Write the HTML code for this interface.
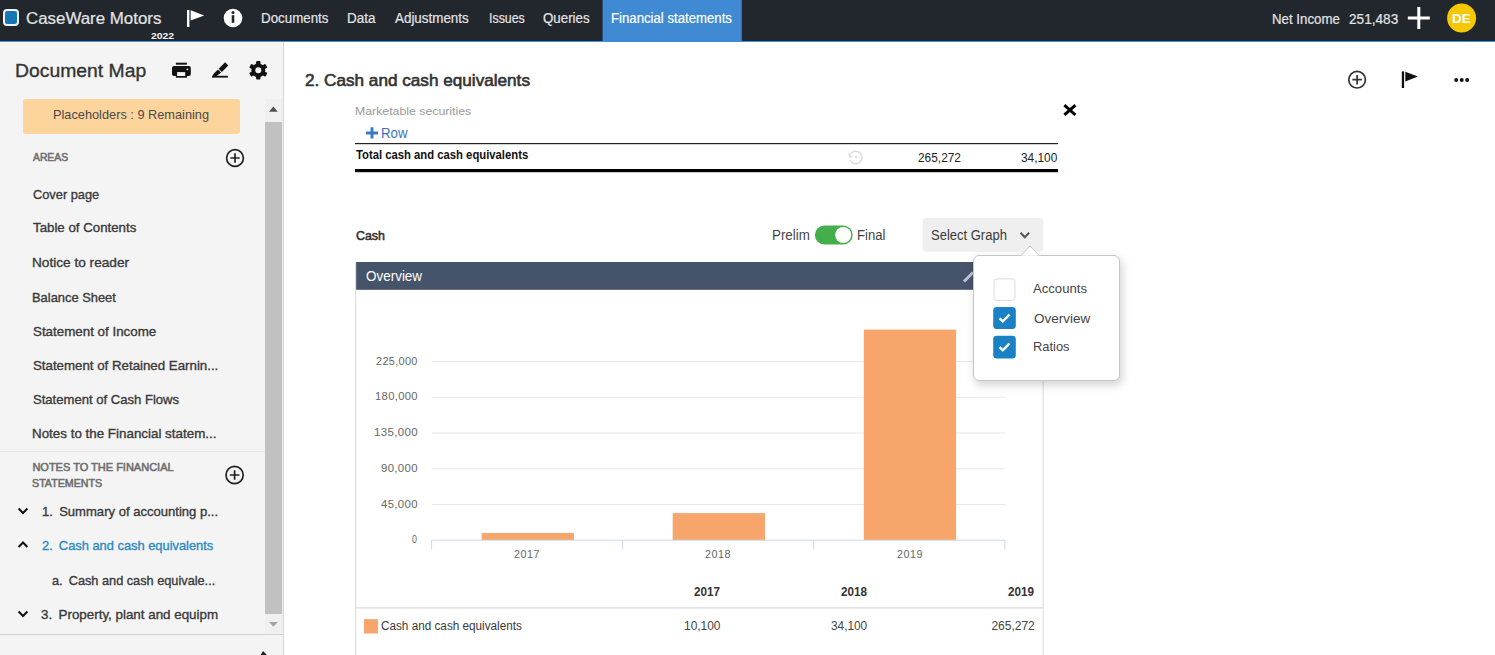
<!DOCTYPE html>
<html><head><meta charset="utf-8">
<style>
*{box-sizing:border-box;margin:0;padding:0}
html,body{width:1495px;height:655px;overflow:hidden;background:#fff;font-family:"Liberation Sans",sans-serif;color:#333}
.a{position:absolute}
.tx{position:absolute;white-space:nowrap;line-height:1;transform-origin:0 0}
svg{position:absolute;overflow:visible}
</style></head><body>
<!-- header -->
<div class="a" style="left:0;top:0;width:1495px;height:41px;background:#22272e"></div>
<div class="a" style="left:0;top:41px;width:1495px;height:1px;background:#3f8fd8"></div>
<div class="a" style="left:3px;top:9px;width:16px;height:17px;border:2px solid #f4f4f4;border-radius:4px;background:#1577b6"></div>
<svg style="left:0;top:0" width="1495" height="41">
  <rect x="187" y="10" width="2.4" height="17" fill="#fff"/>
  <path d="M190.6 10.2 L204.2 15.4 L190.6 20.6Z" fill="#fff"/>
  <circle cx="233" cy="18" r="9.3" fill="#fff"/>
  <rect x="231.7" y="15.2" width="2.6" height="7.6" fill="#22272e"/>
  <circle cx="233" cy="12.6" r="1.5" fill="#22272e"/>
  <rect x="602.6" y="0" width="139.1" height="41" fill="#3f8ad2"/>
  <rect x="1417.3" y="7" width="3" height="22" fill="#fff"/>
  <rect x="1407.8" y="16.5" width="22" height="3" fill="#fff"/>
  <circle cx="1461.6" cy="18" r="14.5" fill="#f5c802"/>
</svg>
<!-- sidebar -->
<div class="a" style="left:0;top:42px;width:283px;height:613px;background:#f4f4f4"></div>
<div class="a" style="left:283px;top:42px;width:1px;height:613px;background:#d6d6d6"></div>
<div class="a" style="left:23px;top:99px;width:217px;height:34.5px;background:#fdd49c;border-radius:3px"></div>
<div class="a" style="left:264.5px;top:98.5px;width:18px;height:535px;background:#f0f0f0"></div>
<div class="a" style="left:265px;top:122px;width:17px;height:492px;background:#c1c1c1"></div>
<div class="a" style="left:0;top:451px;width:264.5px;height:1px;background:#e4e4e4"></div>
<div class="a" style="left:0;top:634px;width:283px;height:1px;background:#d2d2d2"></div>
<svg style="left:0;top:0" width="284" height="655">
  <path d="M269 111.8 L273.4 106.6 L277.8 111.8Z" fill="#505050"/>
  <path d="M269 622 L273.4 626.7 L277.8 622Z" fill="#a3a3a3"/>
  <!-- print -->
  <rect x="175.9" y="62.7" width="11" height="2" fill="#111"/>
  <rect x="172" y="66" width="18.8" height="10" rx="2" fill="#111"/>
  <rect x="175.9" y="71" width="11" height="6.7" fill="#111"/>
  <rect x="177.1" y="72.1" width="8.1" height="3.9" fill="#f4f4f4"/>
  <circle cx="187.4" cy="69.3" r="0.9" fill="#f4f4f4"/>
  <!-- pen -->
  <path d="M225.2 62.3 L228.3 65.4 L221.8 71.9 L218.7 68.8Z" fill="#111"/>
  <path d="M218 69.5 L221.1 72.6 L216.3 76.2 L212.1 77.4 L213.4 73.9Z" fill="#111"/>
  <rect x="212.1" y="75.8" width="15.8" height="1.8" fill="#111"/>
  <!-- gear -->
  <g transform="translate(258.3 70.3)" fill="#111">
    <circle r="6.9"/>
    <rect x="-2.2" y="-9.3" width="4.4" height="18.6" rx="1"/>
    <rect x="-2.2" y="-9.3" width="4.4" height="18.6" rx="1" transform="rotate(60)"/>
    <rect x="-2.2" y="-9.3" width="4.4" height="18.6" rx="1" transform="rotate(120)"/>
    <circle r="3" fill="#f4f4f4"/>
  </g>
  <!-- plus circles -->
  <g fill="none" stroke="#222" stroke-width="1.7">
    <circle cx="235" cy="158" r="8.4"/>
    <path d="M235 153.3V162.7M230.3 158H239.7"/>
    <circle cx="234.6" cy="475" r="8.6"/>
    <path d="M234.6 470.2V479.8M229.8 475H239.4"/>
  </g>
  <!-- chevrons -->
  <g fill="none" stroke="#111" stroke-width="2">
    <path d="M18.6 508.5 L23 513 L27.4 508.5"/>
    <path d="M18.6 547 L23 542.5 L27.4 547"/>
    <path d="M18.6 611.5 L23 616 L27.4 611.5"/>
  </g>
  <path d="M263 651 L266.5 654.5 L264 657 L259.5 657Z" fill="#222"/>
</svg>
<!-- main -->
<svg style="left:0;top:0" width="1495" height="655">
  <!-- top right icons -->
  <g fill="none" stroke="#333" stroke-width="1.7">
    <circle cx="1357.1" cy="79.7" r="8.3"/>
    <path d="M1357.1 75V84.4M1352.4 79.7H1361.8"/>
  </g>
  <rect x="1401.8" y="71.4" width="2.3" height="16.6" fill="#111"/>
  <path d="M1405.3 71.7 L1417.9 76.5 L1405.3 81.4Z" fill="#111"/>
  <circle cx="1456.2" cy="80" r="2" fill="#111"/>
  <circle cx="1461.7" cy="80" r="2" fill="#111"/>
  <circle cx="1467.2" cy="80" r="2" fill="#111"/>
  <!-- close X -->
  <path d="M1065.5 106.2 L1074.3 114 M1074.3 106.2 L1065.5 114" stroke="#000" stroke-width="3" stroke-linecap="square"/>
  <!-- + row -->
  <path d="M372 127.2V138.6M365.9 132.9H378" stroke="#3b7ac4" stroke-width="3"/>
  <rect x="355" y="143" width="703" height="1.2" fill="#222"/>
  <g fill="none" stroke="#dcdcdc" stroke-width="1.5">
    <path d="M850.5 154 A6.3 6.3 0 1 1 850 160"/>
  </g>
  <path d="M848.4 152.5 L852.5 157 L849 157.5Z" fill="#dcdcdc"/>
  <circle cx="856.1" cy="156.8" r="1.2" fill="#dcdcdc"/>
  <rect x="355" y="169" width="703" height="3.2" fill="#000"/>
  <!-- toggle -->
  <rect x="814.9" y="225.5" width="37.8" height="19" rx="9.5" fill="#45ae4c"/>
  <circle cx="843.2" cy="235" r="8" fill="#fff"/>
  <!-- select graph -->
  <rect x="922.6" y="218.1" width="120.6" height="33.6" rx="4" fill="#efefef"/>
  <path d="M1020.5 232.8 L1024.8 237.3 L1029.1 232.8" fill="none" stroke="#555" stroke-width="2"/>
  <!-- panel -->
  <rect x="355.9" y="262" width="687.4" height="27.8" fill="#46546b"/>
  <rect x="355.2" y="262" width="1" height="400" fill="#d9d9d9"/>
  <rect x="1042.6" y="262" width="1" height="400" fill="#d9d9d9"/>
  <path d="M964 281.5 L973 272.5" stroke="#bdc4cf" stroke-width="3"/>
  <!-- grid -->
  <g fill="#e8e8e8">
    <rect x="432" y="361.1" width="572.9" height="1"/>
    <rect x="432" y="396.8" width="572.9" height="1"/>
    <rect x="432" y="432.5" width="572.9" height="1"/>
    <rect x="432" y="468.3" width="572.9" height="1"/>
    <rect x="432" y="504" width="572.9" height="1"/>
  </g>
  <g fill="#f7a56b">
    <rect x="481.6" y="533" width="92.3" height="7.2"/>
    <rect x="672.7" y="513.1" width="92.3" height="27.1"/>
    <rect x="863.8" y="329.6" width="92.3" height="210.6"/>
  </g>
  <g fill="#ccd6eb">
    <rect x="431.6" y="539.7" width="573.3" height="1"/>
    <rect x="431.1" y="540" width="1" height="9.4"/>
    <rect x="622.2" y="540" width="1" height="9.4"/>
    <rect x="813.3" y="540" width="1" height="9.4"/>
    <rect x="1004.4" y="540" width="1" height="9.4"/>
  </g>
  <rect x="356" y="607" width="687" height="1.6" fill="#e3e3e3"/>
  <rect x="364" y="619.2" width="14" height="14.3" fill="#f7a56b"/>
</svg>
<!-- popup -->
<div class="a" style="left:973.4px;top:255.4px;width:146.2px;height:125.8px;background:#fff;border:1px solid #c6c6c6;border-radius:6px;box-shadow:2px 4px 10px rgba(0,0,0,0.18)"></div>
<svg style="left:0;top:0" width="1495" height="655">
  <path d="M1020.3 256.2 L1030 246 L1039.7 256.2Z" fill="#fff" stroke="#c6c6c6" stroke-width="1"/>
  <rect x="1019" y="255.9" width="22" height="2" fill="#fff"/>
  <rect x="994" y="278.9" width="21" height="21.5" rx="3" fill="#fff" stroke="#dcdcdc" stroke-width="1"/>
  <rect x="993.2" y="307.1" width="22.6" height="22" rx="3.5" fill="#1a82c4"/>
  <rect x="993.2" y="335.8" width="22.6" height="22.8" rx="3.5" fill="#1a82c4"/>
  <path d="M999.6 318.3 L1002.8 321.4 L1009.5 314.6" fill="none" stroke="#fff" stroke-width="2.4"/>
  <path d="M999.6 347.2 L1002.8 350.3 L1009.5 343.5" fill="none" stroke="#fff" stroke-width="2.4"/>
</svg>
<div class="tx" style="left:26.00px;top:11.26px;font-size:16px;font-weight:400;color:#e4e4e4;transform:scaleX(1.0547);-webkit-text-stroke:0.2px #e4e4e4;">CaseWare Motors</div>
<div class="tx" style="left:150.80px;top:31.16px;font-size:9.5px;font-weight:700;color:#f2f2f2;transform:scaleX(1.0952);">2022</div>
<div class="tx" style="left:260.75px;top:11.05px;font-size:14px;font-weight:400;color:#e4e4e4;transform:scaleX(0.9529);-webkit-text-stroke:0.2px #e4e4e4;">Documents</div>
<div class="tx" style="left:346.84px;top:11.05px;font-size:14px;font-weight:400;color:#e4e4e4;transform:scaleX(0.9586);-webkit-text-stroke:0.2px #e4e4e4;">Data</div>
<div class="tx" style="left:395.00px;top:11.05px;font-size:14px;font-weight:400;color:#e4e4e4;transform:scaleX(0.9571);-webkit-text-stroke:0.2px #e4e4e4;">Adjustments</div>
<div class="tx" style="left:488.62px;top:11.05px;font-size:14px;font-weight:400;color:#e4e4e4;transform:scaleX(0.8846);-webkit-text-stroke:0.2px #e4e4e4;">Issues</div>
<div class="tx" style="left:543.40px;top:11.05px;font-size:14px;font-weight:400;color:#e4e4e4;transform:scaleX(0.9510);-webkit-text-stroke:0.2px #e4e4e4;">Queries</div>
<div class="tx" style="left:611.26px;top:11.05px;font-size:14px;font-weight:400;color:#fff;transform:scaleX(0.9417);-webkit-text-stroke:0.2px #fff;">Financial statements</div>
<div class="tx" style="left:1271.65px;top:11.75px;font-size:14px;font-weight:400;color:#e4e4e4;transform:scaleX(0.9471);-webkit-text-stroke:0.2px #e4e4e4;">Net Income</div>
<div class="tx" style="left:1349.30px;top:11.75px;font-size:14px;font-weight:400;color:#e4e4e4;transform:scaleX(0.9740);-webkit-text-stroke:0.2px #e4e4e4;">251,483</div>
<div class="tx" style="left:1451.96px;top:11.80px;font-size:13px;font-weight:700;color:#fff;transform:scaleX(1.0353);">DE</div>
<div class="tx" style="left:15.48px;top:60.92px;font-size:19px;font-weight:400;color:#333;transform:scaleX(1.0180);-webkit-text-stroke:0.35px #333;">Document Map</div>
<div class="tx" style="left:53.05px;top:108.27px;font-size:13.5px;font-weight:400;color:#4a4a4a;transform:scaleX(0.9451);">Placeholders : 9 Remaining</div>
<div class="tx" style="left:32.50px;top:152.09px;font-size:11px;font-weight:400;color:#6e6e6e;transform:scaleX(0.9395);-webkit-text-stroke:0.55px #6e6e6e;">AREAS</div>
<div class="tx" style="left:32.50px;top:187.80px;font-size:13px;font-weight:400;color:#3a3a3a;transform:scaleX(0.9851);-webkit-text-stroke:0.35px #3a3a3a;">Cover page</div>
<div class="tx" style="left:32.50px;top:221.40px;font-size:13px;font-weight:400;color:#3a3a3a;transform:scaleX(1.0208);-webkit-text-stroke:0.35px #3a3a3a;">Table of Contents</div>
<div class="tx" style="left:32.25px;top:255.90px;font-size:13px;font-weight:400;color:#3a3a3a;transform:scaleX(1.0489);-webkit-text-stroke:0.35px #3a3a3a;">Notice to reader</div>
<div class="tx" style="left:32.31px;top:290.80px;font-size:13px;font-weight:400;color:#3a3a3a;transform:scaleX(0.9917);-webkit-text-stroke:0.35px #3a3a3a;">Balance Sheet</div>
<div class="tx" style="left:32.50px;top:325.00px;font-size:13px;font-weight:400;color:#3a3a3a;transform:scaleX(1.0275);-webkit-text-stroke:0.35px #3a3a3a;">Statement of Income</div>
<div class="tx" style="left:32.50px;top:358.80px;font-size:13px;font-weight:400;color:#3a3a3a;transform:scaleX(1.0215);-webkit-text-stroke:0.35px #3a3a3a;">Statement of Retained Earnin...</div>
<div class="tx" style="left:32.50px;top:392.70px;font-size:13px;font-weight:400;color:#3a3a3a;transform:scaleX(1.0055);-webkit-text-stroke:0.35px #3a3a3a;">Statement of Cash Flows</div>
<div class="tx" style="left:32.27px;top:426.60px;font-size:13px;font-weight:400;color:#3a3a3a;transform:scaleX(1.0292);-webkit-text-stroke:0.35px #3a3a3a;">Notes to the Financial statem...</div>
<div class="tx" style="left:32.40px;top:461.69px;font-size:11px;font-weight:400;color:#6e6e6e;-webkit-text-stroke:0.55px #6e6e6e;">NOTES TO THE FINANCIAL</div>
<div class="tx" style="left:32.40px;top:477.69px;font-size:11px;font-weight:400;color:#6e6e6e;transform:scaleX(0.9712);-webkit-text-stroke:0.55px #6e6e6e;">STATEMENTS</div>
<div class="tx" style="left:41.60px;top:505.30px;font-size:13px;font-weight:400;color:#3a3a3a;transform:scaleX(1.0046);-webkit-text-stroke:0.35px #3a3a3a;">1.  Summary of accounting p...</div>
<div class="tx" style="left:41.60px;top:538.90px;font-size:13px;font-weight:400;color:#2a8ac4;transform:scaleX(0.9890);-webkit-text-stroke:0.35px #2a8ac4;">2.  Cash and cash equivalents</div>
<div class="tx" style="left:52.40px;top:573.50px;font-size:13px;font-weight:400;color:#3a3a3a;transform:scaleX(0.9795);-webkit-text-stroke:0.35px #3a3a3a;">a.  Cash and cash equivale...</div>
<div class="tx" style="left:41.30px;top:607.90px;font-size:13px;font-weight:400;color:#3a3a3a;transform:scaleX(1.0285);-webkit-text-stroke:0.35px #3a3a3a;">3.  Property, plant and equipm</div>
<div class="tx" style="left:305.40px;top:72.03px;font-size:16.5px;font-weight:400;color:#333;transform:scaleX(1.0392);-webkit-text-stroke:0.6px #333;">2. Cash and cash equivalents</div>
<div class="tx" style="left:354.73px;top:105.97px;font-size:11.5px;font-weight:400;color:#9a9a9a;transform:scaleX(1.0694);">Marketable securities</div>
<div class="tx" style="left:381.36px;top:126.15px;font-size:14px;font-weight:400;color:#3b73b6;transform:scaleX(0.9444);">Row</div>
<div class="tx" style="left:355.50px;top:148.84px;font-size:12px;font-weight:700;color:#111;transform:scaleX(0.9399);">Total cash and cash equivalents</div>
<div class="tx" style="left:917.80px;top:151.74px;font-size:12px;font-weight:400;color:#222;transform:scaleX(0.9907);">265,272</div>
<div class="tx" style="left:1021.40px;top:151.74px;font-size:12px;font-weight:400;color:#222;transform:scaleX(0.9892);">34,100</div>
<div class="tx" style="left:355.60px;top:228.50px;font-size:13px;font-weight:400;color:#333;transform:scaleX(0.9533);-webkit-text-stroke:0.55px #333;">Cash</div>
<div class="tx" style="left:771.64px;top:228.15px;font-size:14px;font-weight:400;color:#444;transform:scaleX(0.9553);">Prelim</div>
<div class="tx" style="left:857.07px;top:228.15px;font-size:14px;font-weight:400;color:#444;transform:scaleX(0.9345);">Final</div>
<div class="tx" style="left:930.77px;top:228.15px;font-size:14px;font-weight:400;color:#3a3a3a;transform:scaleX(0.9287);">Select Graph</div>
<div class="tx" style="left:366.30px;top:268.85px;font-size:14px;font-weight:400;color:#fff;transform:scaleX(0.9610);">Overview</div>
<div class="tx" style="left:1033.30px;top:282.40px;font-size:13px;font-weight:400;color:#444;transform:scaleX(1.0094);">Accounts</div>
<div class="tx" style="left:1033.80px;top:311.80px;font-size:13px;font-weight:400;color:#444;transform:scaleX(1.0370);">Overview</div>
<div class="tx" style="left:1032.81px;top:340.40px;font-size:13px;font-weight:400;color:#444;transform:scaleX(0.9917);">Ratios</div>
<div class="tx" style="left:412.00px;top:535.34px;font-size:10px;font-weight:400;color:#666;transform:scaleX(0.8833);letter-spacing:0.3px;">0</div>
<div class="tx" style="left:380.90px;top:499.62px;font-size:10px;font-weight:400;color:#666;transform:scaleX(1.1375);letter-spacing:0.3px;">45,000</div>
<div class="tx" style="left:380.90px;top:463.90px;font-size:10px;font-weight:400;color:#666;transform:scaleX(1.1375);letter-spacing:0.3px;">90,000</div>
<div class="tx" style="left:373.65px;top:428.18px;font-size:10px;font-weight:400;color:#666;transform:scaleX(1.1486);letter-spacing:0.3px;">135,000</div>
<div class="tx" style="left:374.68px;top:392.46px;font-size:10px;font-weight:400;color:#666;transform:scaleX(1.1216);letter-spacing:0.3px;">180,000</div>
<div class="tx" style="left:375.80px;top:356.74px;font-size:10px;font-weight:400;color:#666;transform:scaleX(1.0921);letter-spacing:0.3px;">225,000</div>
<div class="tx" style="left:514.30px;top:549.93px;font-size:10px;font-weight:400;color:#666;transform:scaleX(1.0708);letter-spacing:0.5px;">2017</div>
<div class="tx" style="left:705.40px;top:549.93px;font-size:10px;font-weight:400;color:#666;transform:scaleX(1.0708);letter-spacing:0.5px;">2018</div>
<div class="tx" style="left:896.50px;top:549.93px;font-size:10px;font-weight:400;color:#666;transform:scaleX(1.0708);letter-spacing:0.5px;">2019</div>
<div class="tx" style="left:694.00px;top:585.84px;font-size:12px;font-weight:700;color:#333;transform:scaleX(0.9741);">2017</div>
<div class="tx" style="left:841.10px;top:585.84px;font-size:12px;font-weight:700;color:#333;transform:scaleX(0.9741);">2018</div>
<div class="tx" style="left:1008.20px;top:585.84px;font-size:12px;font-weight:700;color:#333;transform:scaleX(0.9741);">2019</div>
<div class="tx" style="left:381.20px;top:620.24px;font-size:12px;font-weight:400;color:#3a3a3a;transform:scaleX(0.9778);">Cash and cash equivalents</div>
<div class="tx" style="left:684.01px;top:619.84px;font-size:12px;font-weight:400;color:#444;transform:scaleX(0.9944);">10,100</div>
<div class="tx" style="left:831.00px;top:619.84px;font-size:12px;font-weight:400;color:#444;transform:scaleX(0.9838);">34,100</div>
<div class="tx" style="left:991.40px;top:619.84px;font-size:12px;font-weight:400;color:#444;">265,272</div>
</body></html>
